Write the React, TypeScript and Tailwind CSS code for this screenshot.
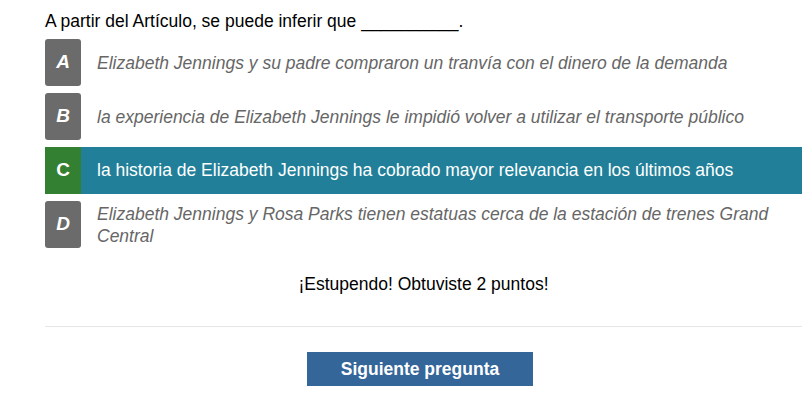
const options = [
  { letter: 'A', text: 'Elizabeth Jennings y su padre compraron un tranvía con el dinero de la demanda' },
  { letter: 'B', text: 'la experiencia de Elizabeth Jennings le impidió volver a utilizar el transporte público' },
  { letter: 'C', text: 'la historia de Elizabeth Jennings ha cobrado mayor relevancia en los últimos años', correct: true },
  { letter: 'D', text: 'Elizabeth Jennings y Rosa Parks tienen estatuas cerca de la estación de trenes Grand Central' },
];

export default function App() {
  return (
    <div className="h-[400px] w-[805px] bg-white pl-[45px] pr-[3px] font-['Liberation_Sans',Arial,sans-serif] text-[17.5px]">
      <p className="pt-[11px] leading-[20px] text-black">
        A partir del Artículo, se puede inferir que __________.
      </p>

      <div className="mt-[8px] flex flex-col gap-[7px]">
        {options.map((o) =>
          o.correct ? (
            <div className="flex h-[47px] items-center bg-[#217f99]" key={o.letter}>
              <div className="flex h-full w-[36px] shrink-0 items-center justify-center bg-[#338033] text-[19px] font-bold text-white">
                {o.letter}
              </div>
              <span className="pl-[16px] text-white">{o.text}</span>
            </div>
          ) : (
            <div className="flex min-h-[47px] items-center" key={o.letter}>
              <div className="flex h-[47px] w-[36px] shrink-0 items-center justify-center self-start rounded-[3px] bg-[#6b6b6b] text-[19px] font-bold italic text-white">
                {o.letter}
              </div>
              <span className="pr-4 pl-[16px] leading-[22px] text-[#666] italic">{o.text}</span>
            </div>
          ),
        )}
      </div>

      <p className="mt-[26px] text-center leading-[20px] text-black">
        ¡Estupendo! Obtuviste 2 puntos!
      </p>

      <div className="mt-[32px] border-t border-[#e6e6e6]" />

      <div className="mt-[25px] flex justify-center pr-[7px]">
        <button className="h-[34px] w-[226px] bg-[#346699] text-[17.5px] font-bold text-white">
          Siguiente pregunta
        </button>
      </div>
    </div>
  );
}
